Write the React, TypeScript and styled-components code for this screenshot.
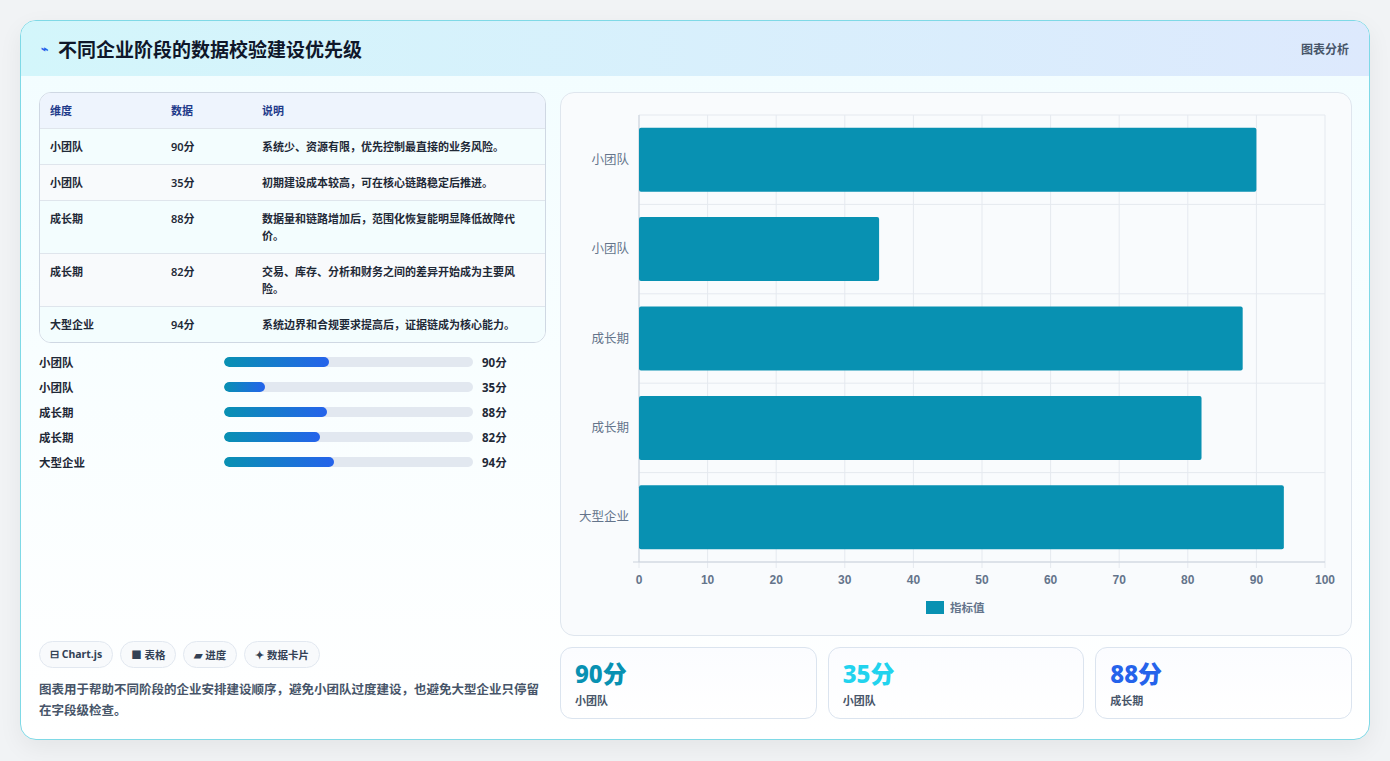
import React from "react";
import styled, { createGlobalStyle } from "styled-components";

const G = createGlobalStyle`
  html,body{margin:0;padding:0;background:#f1f3f5;}
  body{font-family:"Noto Sans","Noto Sans CJK SC",sans-serif;}
`;
const Page = styled.div`padding:20px 20px 21px 20px;height:720px;`;
const Card = styled.div`
  width:1348px;height:718px;border:1px solid #7fd9e6;border-radius:16px;overflow:hidden;
  background:linear-gradient(180deg,#f2fdff,#ffffff);box-shadow:0 8px 24px rgba(0,0,0,.06);
  display:flex;flex-direction:column;
`;
const Header = styled.div`
  height:55px;flex:none;display:flex;align-items:center;justify-content:space-between;padding:0 20px;
  background:linear-gradient(90deg,#d3f6fb,#dde9fd);
`;
const Title = styled.h1`margin:0;font-size:19px;font-weight:700;color:#0f172a;display:flex;align-items:center;gap:10px;`;
const Tag = styled.span`font-size:12px;color:#475569;font-weight:600;`;
const Body = styled.div`flex:1;display:grid;grid-template-columns:507px 792px;gap:14px;padding:16px 18px 18px 18px;`;
const Left = styled.div`display:flex;flex-direction:column;`;
const Table = styled.div`border:1px solid #cfd8e3;border-radius:12px;overflow:hidden;background:#fff;`;
const Row = styled.div<{ $head?: boolean; $alt?: boolean }>`
  display:grid;grid-template-columns:121px 91px 1fr;padding:${p => p.$head ? "9px 10px" : "9px 10px 9px 10px"};
  font-size:11px;line-height:17px;font-weight:600;color:${p => p.$head ? "#1e3a8a" : "#1f2937"};
  background:${p => p.$head ? "#eef4fd" : p.$alt ? "#f8fafc" : "#f3fdfe"};
  border-top:${p => p.$head ? "none" : "1px solid #dfe5ec"};
`;
const Bars = styled.div`display:flex;flex-direction:column;gap:7px;margin-top:10px;`;
const BarRow = styled.div`display:grid;grid-template-columns:185px 249px 50px;align-items:center;font-size:11.5px;font-weight:600;color:#1f2937;height:18px;`;
const Track = styled.div`height:10px;border-radius:5px;background:#e2e8f0;overflow:hidden;`;
const Fill = styled.div`height:100%;border-radius:5px;background:linear-gradient(90deg,#0891b2,#2563eb);`;
const Val = styled.span`padding-left:9px;font-weight:700;`;
const Chips = styled.div`margin-top:auto;display:flex;gap:7px;`;
const Chip = styled.span`font-size:10.5px;font-weight:700;color:#334155;border:1px solid #e2e8f0;background:#f8fafc;border-radius:14px;padding:5px 10px;`;
const Desc = styled.p`margin:11px 0 0;font-size:12.5px;line-height:21px;color:#475569;font-weight:600;`;
const Right = styled.div`display:flex;flex-direction:column;gap:11px;`;
const ChartBox = styled.div`height:542px;border:1px solid #dfe6ee;border-radius:14px;background:#f9fbfd;display:flex;flex-direction:column;`;
const Stats = styled.div`display:grid;grid-template-columns:repeat(3,1fr);gap:11px;`;
const Stat = styled.div`height:72px;border:1px solid #dbe4ef;border-radius:12px;background:linear-gradient(180deg,#fbfcff,#fff);padding:10px 14px;box-sizing:border-box;`;
const Big = styled.div<{ $c: string }>`font-size:24px;font-weight:800;color:${p => p.$c};line-height:32px;`;
const Small = styled.div`font-size:11px;color:#475569;font-weight:600;margin-top:2px;`;

const data = [
  ["小团队", 90, "系统少、资源有限，优先控制最直接的业务风险。"],
  ["小团队", 35, "初期建设成本较高，可在核心链路稳定后推进。"],
  ["成长期", 88, "数据量和链路增加后，范围化恢复能明显降低故障代价。"],
  ["成长期", 82, "交易、库存、分析和财务之间的差异开始成为主要风险。"],
  ["大型企业", 94, "系统边界和合规要求提高后，证据链成为核心能力。"],
] as const;

function Chart() {
  const x0 = 78, x1 = 764, y0 = 22, y1 = 469;
  const band = (y1 - y0) / 5;
  return (
    <svg width="790" height="540" style={{ display: "block" }}>
      {Array.from({ length: 11 }, (_, i) => {
        const x = x0 + (x1 - x0) * i / 10;
        return <g key={i}>
          <line x1={x} x2={x} y1={y0} y2={y1 + 6} stroke="#e5e9ef" />
          <text x={x} y={491} fontSize="12" fill="#64748b" textAnchor="middle" fontFamily="Liberation Sans" fontWeight="bold">{i * 10}</text>
        </g>;
      })}
      {Array.from({ length: 6 }, (_, i) => <line key={i} x1={x0} x2={x1} y1={y0 + band * i} y2={y0 + band * i} stroke="#e5e9ef" />)}
      <line x1={x0} x2={x0} y1={y0} y2={y1} stroke="#cbd2dc" />
      <line x1={x0 - 6} x2={x1} y1={y1} y2={y1} stroke="#cbd2dc" />
      {data.map((d, i) => {
        const cy = y0 + band * i + band / 2;
        return <g key={i}>
          <rect x={x0} y={cy - 32} width={(x1 - x0) * d[1] / 100} height={64} fill="#0891b2" rx="2" />
          <text x={x0 - 10} y={cy + 4} fontSize="12.5" fill="#64748b" textAnchor="end">{d[0]}</text>
        </g>;
      })}
      <rect x={365} y={508} width={18} height={13} fill="#0891b2" />
      <text x={389} y={519} fontSize="11.5" fill="#64748b" fontWeight="600">指标值</text>
    </svg>
  );
}

export default function App() {
  return (
    <Page>
      <G />
      <Card>
        <Header>
          <Title><span style={{ color: "#2563eb", fontSize: 12 }}>⌁</span>不同企业阶段的数据校验建设优先级</Title>
          <Tag>图表分析</Tag>
        </Header>
        <Body>
          <Left>
            <Table>
              <Row $head><span>维度</span><span>数据</span><span>说明</span></Row>
              {data.map((d, i) => (
                <Row key={i} $alt={i % 2 === 1}><span>{d[0]}</span><span>{d[1]}分</span><span>{d[2]}</span></Row>
              ))}
            </Table>
            <Bars>
              {data.map((d, i) => (
                <BarRow key={i}><span>{d[0]}</span><Track><Fill style={{ width: `${d[1] * 0.47}%` }} /></Track><Val>{d[1]}分</Val></BarRow>
              ))}
            </Bars>
            <Chips>
              <Chip>⊟ Chart.js</Chip><Chip>■ 表格</Chip><Chip>▰ 进度</Chip><Chip>✦ 数据卡片</Chip>
            </Chips>
            <Desc>图表用于帮助不同阶段的企业安排建设顺序，避免小团队过度建设，也避免大型企业只停留在字段级检查。</Desc>
          </Left>
          <Right>
            <ChartBox><Chart /></ChartBox>
            <Stats>
              <Stat><Big $c="#0891b2">90分</Big><Small>小团队</Small></Stat>
              <Stat><Big $c="#22d3ee">35分</Big><Small>小团队</Small></Stat>
              <Stat><Big $c="#2563eb">88分</Big><Small>成长期</Small></Stat>
            </Stats>
          </Right>
        </Body>
      </Card>
    </Page>
  );
}
